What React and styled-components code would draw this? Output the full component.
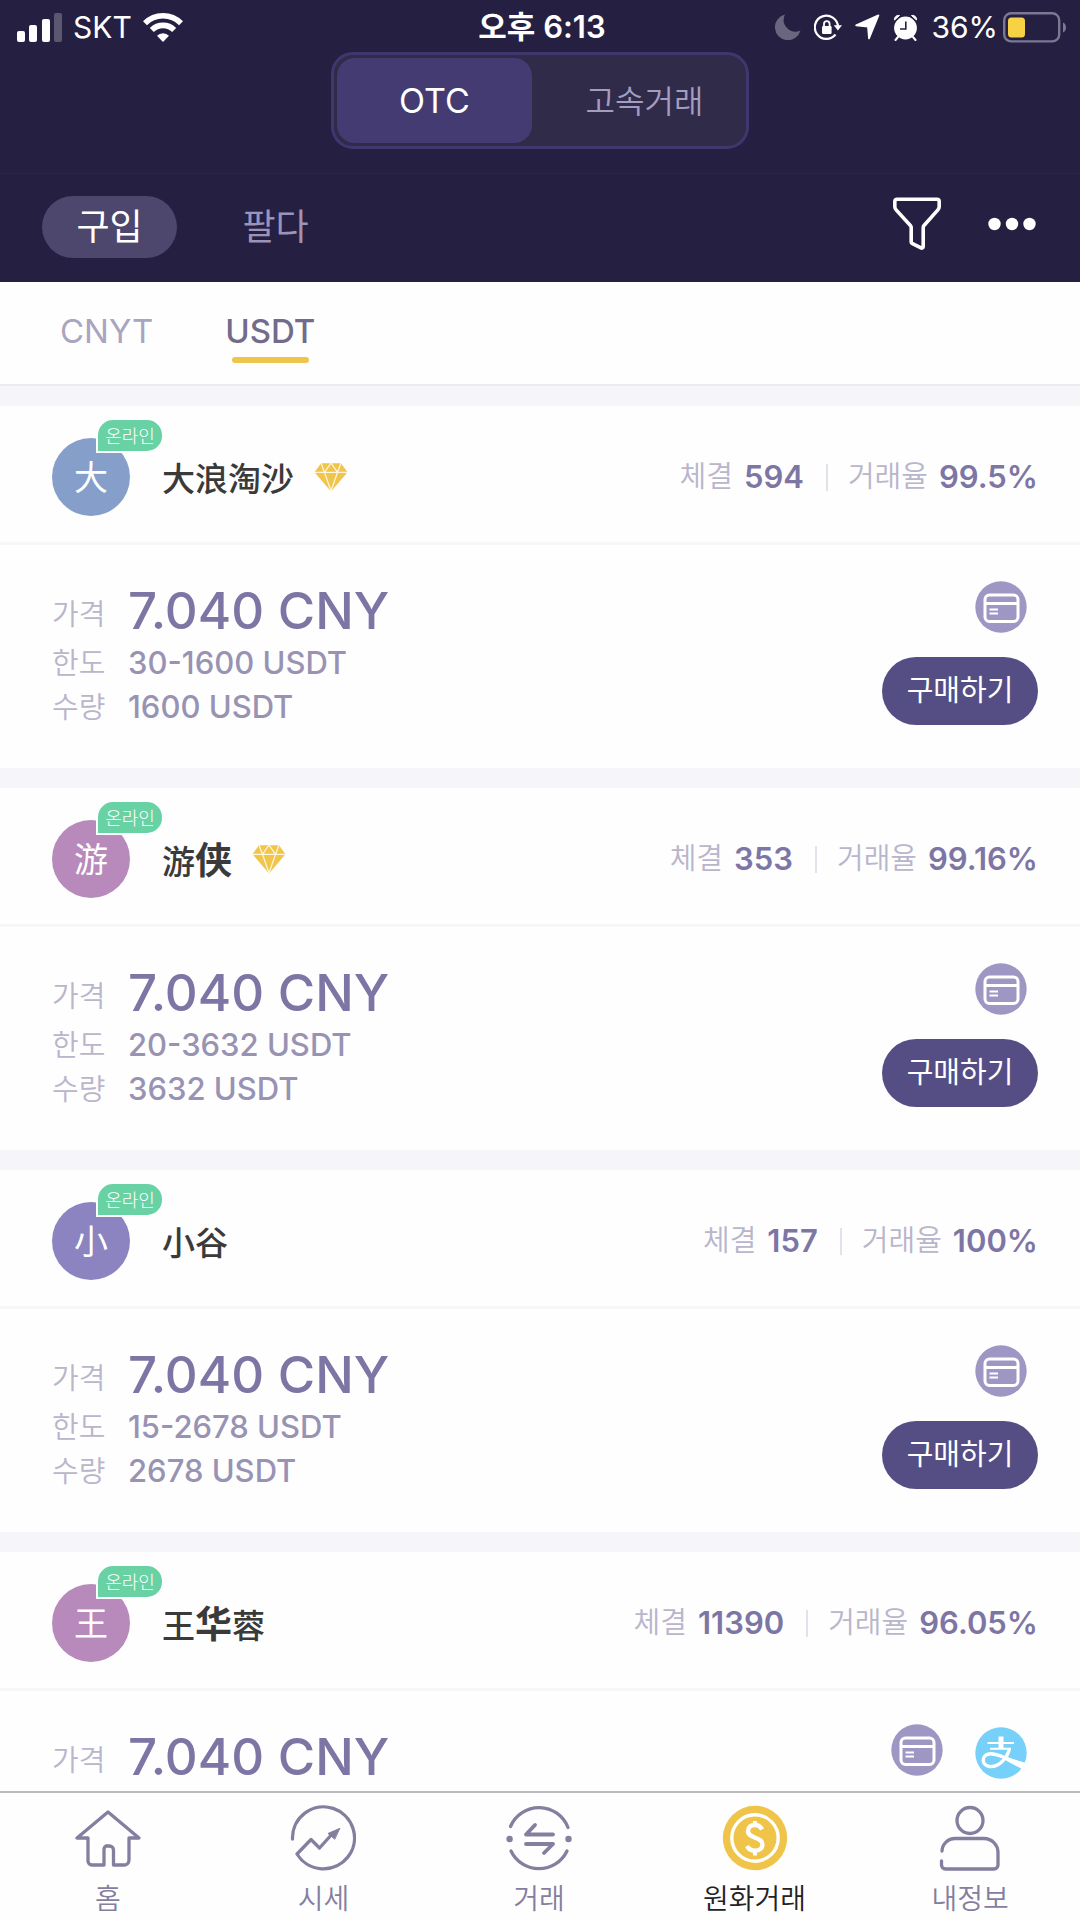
import styled, { createGlobalStyle } from "styled-components";

const GlobalStyle = createGlobalStyle`
  * {
    box-sizing: border-box;
  }
  body {
    margin: 0;
    background: #fefefe;
    font-family: Inter, "Noto Sans CJK KR", sans-serif;
    color: #3a3a3a;
  }
  button {
    font-family: inherit;
    border: 0;
    padding: 0;
    background: none;
    cursor: pointer;
  }
  svg {
    display: block;
    flex: none;
  }
`;

const offers = [
  {
    name: [{ text: "大浪淘沙" }],
    initial: "大",
    color: "#869fca",
    vip: true,
    deals: "594",
    rate: "99.5%",
    limit: "30-1600 USDT",
    amount: "1600 USDT",
    methods: ["card"],
  },
  {
    name: [{ text: "游" }, { text: "侠", heavy: true }],
    initial: "游",
    color: "#b889bb",
    vip: true,
    deals: "353",
    rate: "99.16%",
    limit: "20-3632 USDT",
    amount: "3632 USDT",
    methods: ["card"],
  },
  {
    name: [{ text: "小谷" }],
    initial: "小",
    color: "#8b84c1",
    deals: "157",
    rate: "100%",
    limit: "15-2678 USDT",
    amount: "2678 USDT",
    methods: ["card"],
  },
  {
    name: [{ text: "王" }, { text: "华", heavy: true }, { text: "蓉" }],
    initial: "王",
    color: "#b889bb",
    deals: "11390",
    rate: "96.05%",
    methods: ["card", "alipay"],
  },
];

const Screen = styled.div`
  display: flex;
  flex-direction: column;
  height: 100vh;
  overflow: hidden;
`;

const Header = styled.header`
  flex: none;
  background: #251f42;
  color: #fff;
`;

/* ---------- status bar ---------- */

const StatusBar = styled.div`
  display: grid;
  grid-template-columns: 1fr auto 1fr;
  align-items: center;
  height: 52px;
  padding: 2px 13px 0 17px;
  font-size: 30px;
  line-height: 36px;
`;

const StatusGroup = styled.div`
  display: flex;
  align-items: center;
  justify-content: ${({ $end }) => ($end ? "flex-end" : "flex-start")};
  gap: ${({ $end }) => ($end ? "13px" : "11px")};
`;

const Clock = styled.time`
  font-size: 31px;
  font-weight: 600;
`;

const Battery = styled.span`
  display: flex;
  align-items: center;
  gap: 5px;
`;

/* ---------- header controls ---------- */

const ModeRow = styled.div`
  display: flex;
  justify-content: center;
  padding-bottom: 24px;
  border-bottom: 1px solid #2b2547;
`;

const ModeSwitch = styled.div`
  display: flex;
  width: 418px;
  height: 97px;
  padding: 3px;
  border: 3px solid #40376e;
  border-radius: 22px;
  background: #302b49;
`;

const ModeButton = styled.button`
  flex: ${({ $active }) => ($active ? "0 0 195px" : 1)};
  padding: ${({ $active }) => ($active ? 0 : "0 0 4px 14px")};
  border-radius: 18px;
  background: ${({ $active }) => ($active ? "#453b73" : "transparent")};
  color: ${({ $active }) => ($active ? "#fff" : "#a59dc0")};
  font-size: ${({ $active }) => ($active ? "34px" : "32px")};
  font-weight: ${({ $active }) => ($active ? 400 : 350)};
`;

const SideRow = styled.div`
  display: flex;
  align-items: center;
  height: 108px;
  padding: 0 44px 2px 42px;
`;

const SideButton = styled.button`
  width: 135px;
  height: 62px;
  margin-right: 31px;
  border-radius: 31px;
  background: ${({ $active }) => ($active ? "#4d466d" : "transparent")};
  color: ${({ $active }) => ($active ? "#fff" : "#9c94b8")};
  font-size: 36px;
  line-height: 62px;
`;

const Actions = styled.div`
  display: flex;
  align-items: center;
  gap: 47px;
  margin-left: auto;
  padding-bottom: 6px;
`;

/* ---------- coin tabs ---------- */

const CoinTabs = styled.nav`
  display: flex;
  flex: none;
  gap: 72px;
  height: 104px;
  padding: 28px 60px 0;
  border-bottom: 2px solid #ececef;
  background: #fefefe;
`;

const CoinTab = styled.button`
  display: flex;
  flex-direction: column;
  align-items: center;
  color: ${({ $active }) => ($active ? "#726b8c" : "#a9a4c0")};
  font-size: 33px;
  font-weight: ${({ $active }) => ($active ? 500 : 400)};
  line-height: 42px;

  &::after {
    content: "";
    width: 77px;
    height: 6px;
    margin-top: 5px;
    border-radius: 3px;
    background: ${({ $active }) => ($active ? "#efc64d" : "transparent")};
  }
`;

/* ---------- offers ---------- */

const OfferList = styled.main`
  display: flex;
  flex: 1;
  flex-direction: column;
  gap: 20px;
  min-height: 0;
  padding-top: 20px;
  overflow: hidden;
  background: #f6f6fa;
`;

const Card = styled.article`
  flex: none;
  background: #fefefe;
`;

const CardHead = styled.div`
  display: flex;
  align-items: center;
  height: 139px;
  padding: 6px 42px 0 52px;
  border-bottom: 3px solid #f7f7fa;
`;

const Avatar = styled.div`
  position: relative;
  width: 78px;
  height: 78px;
  border-radius: 50%;
  background: ${({ $color }) => $color};
  color: #fff;
  font-family: "Noto Sans CJK SC", sans-serif;
  font-size: 34px;
  line-height: 76px;
  text-align: center;
`;

const Online = styled.span`
  position: absolute;
  top: -20px;
  left: 44px;
  width: 68px;
  height: 35px;
  border: 2px solid #fefefe;
  border-radius: 17px 17px 17px 0;
  background: #68d2a5;
  font-family: "Noto Sans CJK KR", sans-serif;
  font-size: 18px;
  font-weight: 300;
  line-height: 30px;
  text-align: center;
  white-space: nowrap;
`;

const Name = styled.h2`
  margin: 0 20px 0 32px;
  font-family: "Noto Sans CJK SC", sans-serif;
  font-size: 33px;
  font-weight: 500;
  line-height: 44px;
`;

const Heavy = styled.span`
  font-size: 37px;
  font-weight: 700;
`;

const Stats = styled.div`
  display: flex;
  align-items: center;
  margin-left: auto;
`;

const Stat = styled.span`
  display: flex;
  align-items: center;
  gap: 11px;
  line-height: 36px;

  & + & {
    margin-left: 22px;
    padding-left: 22px;
    background: linear-gradient(#e3e2ea, #e3e2ea) left center / 2px 27px no-repeat;
  }
`;

const Label = styled.span`
  color: #b9b5cb;
  font-size: 29px;
  font-weight: 350;
`;

const StatValue = styled.span`
  color: #7d76a5;
  font-size: 31px;
  font-weight: 600;
`;

const CardBody = styled.div`
  display: flex;
  justify-content: space-between;
  height: 223px;
  padding: 36px 42px 0 52px;
`;

const Terms = styled.dl`
  display: grid;
  grid-template-columns: 76px auto;
  grid-template-rows: 60px 44px 44px;
  align-items: baseline;
  align-content: start;
  margin: 0;
`;

const Term = styled.dt`
  align-self: ${({ $price }) => ($price ? "end" : "baseline")};
  padding-bottom: ${({ $price }) => ($price ? "4px" : 0)};
  color: #b9b5cb;
  font-size: 29px;
  font-weight: 350;
  line-height: 44px;
`;

const Detail = styled.dd`
  margin: 0;
  color: ${({ $price }) => ($price ? "#7d76a5" : "#9893b3")};
  font-size: ${({ $price }) => ($price ? "51px" : "31px")};
  font-weight: 500;
  line-height: ${({ $price }) => ($price ? "60px" : "44px")};
`;

const Side = styled.div`
  display: flex;
  flex-direction: column;
  align-items: flex-end;
  gap: 24px;
`;

const Methods = styled.div`
  display: flex;
  align-items: flex-end;
  gap: 32px;
  height: 52px;
  padding-right: 11px;

  & > :not(:last-child) {
    margin-bottom: 3px;
  }
`;

const BuyButton = styled.button`
  width: 156px;
  height: 68px;
  border-radius: 34px;
  background: #554e85;
  color: #fff;
  font-size: 29px;
  line-height: 66px;
`;

/* ---------- bottom navigation ---------- */

const BottomNav = styled.nav`
  display: grid;
  flex: none;
  grid-template-columns: repeat(5, 1fr);
  height: 129px;
  padding-right: 2px;
  border-top: 2px solid #b9b9be;
  background: #fefefe;
`;

const NavItem = styled.a`
  display: flex;
  flex-direction: column;
  align-items: center;
  gap: 10px;
  padding-top: 12px;
  color: ${({ $active }) => ($active ? "#222" : "#847e9f")};
  font-size: 28px;
  font-weight: 350;
  line-height: 36px;
  text-decoration: none;
`;

/* ---------- icons ---------- */

function SignalIcon() {
  return (
    <svg width="45" height="30" viewBox="0 0 45 30" fill="#fff" aria-hidden="true">
      <rect x="0" y="19" width="8" height="11" rx="2" />
      <rect x="12" y="13" width="8" height="17" rx="2" />
      <rect x="25" y="7" width="8" height="23" rx="2" />
      <rect x="37" y="1" width="8" height="29" rx="2" opacity="0.25" />
    </svg>
  );
}

function WifiIcon() {
  return (
    <svg width="40" height="30" viewBox="0 0 40 30" aria-hidden="true">
      <g fill="none" stroke="#fff" strokeWidth="5.6">
        <path d="M2 11.2a25.5 25.5 0 0 1 36 0" />
        <path d="M8.8 18a15.8 15.8 0 0 1 22.4 0" />
      </g>
      <path d="M20 30l-6-6.2a8.4 8.4 0 0 1 12 0z" fill="#fff" />
    </svg>
  );
}

function MoonIcon() {
  return (
    <svg width="26" height="26" viewBox="0 0 26 26" aria-hidden="true">
      <path d="M10 0.5A13 13 0 1 0 25.5 16.5 11.8 11.8 0 0 1 10 0.5z" fill="#6b6680" />
    </svg>
  );
}

function LockIcon() {
  return (
    <svg width="28" height="27" viewBox="0 0 28 27" fill="none" aria-hidden="true">
      <path d="M24 12.5A11.6 11.6 0 1 0 21.5 20.5" stroke="#fff" strokeWidth="2.2" />
      <path d="M19.8 11.2h8.2l-4.1 5.4z" fill="#fff" />
      <rect x="8" y="12" width="9.6" height="8" rx="1.2" fill="#fff" />
      <path d="M10 12.5V10a2.8 2.8 0 0 1 5.6 0v2.5" stroke="#fff" strokeWidth="1.8" />
    </svg>
  );
}

function LocationIcon() {
  return (
    <svg width="25" height="26" viewBox="0 0 25 26" aria-hidden="true">
      <path
        d="M23.4 1.4L14 24.4 13 12.6 1.2 11.4z"
        fill="#fff"
        stroke="#fff"
        strokeWidth="1.8"
        strokeLinejoin="round"
      />
    </svg>
  );
}

function AlarmIcon() {
  return (
    <svg width="25" height="27" viewBox="0 0 25 27" aria-hidden="true">
      <circle cx="12.5" cy="14" r="11.4" fill="#fff" />
      <path d="M1.5 6A4 4 0 0 1 6.500 1.500zM23.5 6A4 4 0 0 0 18.500 1.500z" fill="#fff" stroke="#fff" />
      <path d="M5 23l-2.500 3M20 23l2.500 3" stroke="#fff" strokeWidth="2" strokeLinecap="round" />
      <path d="M12.8 7.500v7.500H7" fill="none" stroke="#251f42" strokeWidth="1.6" />
    </svg>
  );
}

function BatteryIcon() {
  return (
    <svg width="64" height="31" viewBox="0 0 64 31" aria-hidden="true">
      <rect x="1.2" y="1.2" width="55" height="28.2" rx="7" fill="none" stroke="#7c7891" strokeWidth="2.4" />
      <rect x="5" y="5.5" width="17" height="20" rx="3.5" fill="#f7d344" />
      <path d="M60 10.5c4 1.5 4 8.500 0 10z" fill="#7c7891" />
    </svg>
  );
}

function FilterIcon() {
  return (
    <svg width="48" height="54" viewBox="0 0 48 54" fill="none" aria-hidden="true">
      <path
        d="M4 2.2h40a2.2 2.2 0 0 1 2.2 2.2v5.2a5 5 0 0 1-1.3 3.3L31 28.5a3 3 0 0 0-.8 2V49.5a1.5 1.5 0 0 1-2.2 1.4l-9-4.6a1.5 1.5 0 0 1-.8-1.3V30.5a3 3 0 0 0-.8-2L3.1 12.9a5 5 0 0 1-1.3-3.3V4.4A2.2 2.2 0 0 1 4 2.2z"
        stroke="#fff"
        strokeWidth="3.6"
        strokeLinejoin="round"
      />
    </svg>
  );
}

function MoreIcon() {
  return (
    <svg width="48" height="14" viewBox="0 0 48 14" fill="#fff" aria-hidden="true">
      <circle cx="6.5" cy="7" r="6.2" />
      <circle cx="24" cy="7" r="6.2" />
      <circle cx="41.5" cy="7" r="6.2" />
    </svg>
  );
}

function DiamondIcon() {
  return (
    <svg width="34" height="30" viewBox="0 0 34 30" role="img" aria-label="VIP">
      <path d="M7 1.2h20l6.5 9L17 29.5 0.5 10.2z" fill="#efc54c" />
      <path
        d="M0 10.4h34M7 1l3.500 9.400L17 1l6.500 9.400L27 1M10.500 10.400L17 29l6.500-18.600"
        fill="none"
        stroke="#fff6dc"
        strokeWidth="1.3"
      />
    </svg>
  );
}

function CardIcon() {
  return (
    <svg width="52" height="52" viewBox="0 0 52 52" fill="none" role="img" aria-label="은행 카드">
      <circle cx="26" cy="26" r="25.7" fill="#9e97c4" />
      <rect x="10" y="14" width="33" height="26.5" rx="4.5" stroke="#fff" strokeWidth="3" />
      <path d="M10 22.5h33" stroke="#fff" strokeWidth="3" />
      <path d="M14.5 28.5h8.5M14.5 32.5h8.5" stroke="#fff" strokeWidth="1.8" />
    </svg>
  );
}

function AlipayIcon() {
  return (
    <svg width="52" height="52" viewBox="0 0 52 52" fill="none" role="img" aria-label="알리페이">
      <circle cx="26" cy="26" r="25.7" fill="#76d0f9" />
      <path d="M26 9.5v12" stroke="#fff" strokeWidth="5" />
      <path d="M12.5 16h26.5M15 21.8h21" stroke="#fff" strokeWidth="2" />
      <path
        d="M34.5 21.5C32 32 23.5 40.5 14.5 39.5 6.5 38.5 6 28.5 14 27c8-1.5 20 6 33 11"
        stroke="#fff"
        strokeWidth="3.4"
      />
      <path d="M33 30.5l18.500 5.500-3.700 6.500-16.800-9z" fill="#fff" />
    </svg>
  );
}

const methodIcons = { card: CardIcon, alipay: AlipayIcon };

function LineIcon({ children }) {
  return (
    <svg
      width="66"
      height="66"
      viewBox="0 0 66 66"
      fill="none"
      stroke="#847e9f"
      strokeWidth="3.3"
      strokeLinecap="round"
      strokeLinejoin="round"
      aria-hidden="true"
    >
      {children}
    </svg>
  );
}

function HomeIcon() {
  return (
    <LineIcon>
      <path d="M33 7L2 33h11v23a4 4 0 0 0 4 4h12V45a4 4 0 0 1 2-4h3.500a4 4 0 0 1 4 4v15H49a5 5 0 0 0 5-5V33h10z" />
    </LineIcon>
  );
}

function MarketIcon() {
  return (
    <LineIcon>
      <path d="M2.500 34A31 31 0 1 1 7 49L21 34.500l8.500 8.500L43 28" />
      <path d="M49.500 23.500l-11.500 5 6.500 5.500z" fill="#847e9f" strokeWidth="1" />
    </LineIcon>
  );
}

function TradeIcon() {
  return (
    <LineIcon>
      <path d="M4.500 21.500A31 31 0 0 1 62 22.500M5 46A31 31 0 0 0 61 46" />
      <path d="M47 29.500H20l9-9.500M20 39h27l-9 9" strokeWidth="3.8" />
      <g fill="#847e9f" stroke="none">
        <circle cx="3.6" cy="34" r="3.2" />
        <circle cx="62.500" cy="34" r="3.2" />
      </g>
    </LineIcon>
  );
}

function CoinIcon() {
  return (
    <svg width="66" height="66" viewBox="0 0 66 66" fill="none" stroke="#fff" aria-hidden="true">
      <circle cx="33" cy="33" r="32.2" fill="#efc449" stroke="none" />
      <circle cx="33" cy="33" r="23.2" strokeWidth="3.4" />
      <path
        d="M40 24.5c-1.500-3-4-4.500-7-4.500-4 0-7 2.200-7 6 0 8 14.500 5.500 14.500 13.500 0 4-3.500 6.200-7.500 6.200s-6.500-1.700-8-4.700"
        strokeWidth="4.4"
      />
      <path d="M33 16v5M33 45v5.500" strokeWidth="4" />
    </svg>
  );
}

function ProfileIcon() {
  return (
    <LineIcon>
      <circle cx="33" cy="15.5" r="13" />
      <path d="M5 46a13 13 0 0 1 13-12.500h29a14 14 0 0 1 14 14V60a4 4 0 0 1-4 4H8.500a4 4 0 0 1-4-4v-4" />
    </LineIcon>
  );
}

const navItems = [
  { label: "홈", Icon: HomeIcon },
  { label: "시세", Icon: MarketIcon },
  { label: "거래", Icon: TradeIcon },
  { label: "원화거래", Icon: CoinIcon, active: true },
  { label: "내정보", Icon: ProfileIcon },
];

function OfferCard({ offer }) {
  return (
    <Card>
      <CardHead>
        <Avatar $color={offer.color}>
          {offer.initial}
          <Online>온라인</Online>
        </Avatar>
        <Name>
          {offer.name.map(({ text, heavy }) => (heavy ? <Heavy key={text}>{text}</Heavy> : text))}
        </Name>
        {offer.vip && <DiamondIcon />}
        <Stats>
          <Stat>
            <Label>체결</Label>
            <StatValue>{offer.deals}</StatValue>
          </Stat>
          <Stat>
            <Label>거래율</Label>
            <StatValue>{offer.rate}</StatValue>
          </Stat>
        </Stats>
      </CardHead>
      <CardBody>
        <Terms>
          <Term $price>가격</Term>
          <Detail $price>7.040 CNY</Detail>
          {offer.limit && (
            <>
              <Term>한도</Term>
              <Detail>{offer.limit}</Detail>
            </>
          )}
          {offer.amount && (
            <>
              <Term>수량</Term>
              <Detail>{offer.amount}</Detail>
            </>
          )}
        </Terms>
        <Side>
          <Methods>
            {offer.methods.map((method) => {
              const Icon = methodIcons[method];
              return <Icon key={method} />;
            })}
          </Methods>
          {offer.amount && <BuyButton type="button">구매하기</BuyButton>}
        </Side>
      </CardBody>
    </Card>
  );
}

export default function App() {
  return (
    <>
      <GlobalStyle />
      <Screen>
        <Header>
          <StatusBar>
            <StatusGroup>
              <SignalIcon />
              SKT
              <WifiIcon />
            </StatusGroup>
            <Clock>오후 6:13</Clock>
            <StatusGroup $end>
              <MoonIcon />
              <LockIcon />
              <LocationIcon />
              <AlarmIcon />
              <Battery>
                36%
                <BatteryIcon />
              </Battery>
            </StatusGroup>
          </StatusBar>
          <ModeRow>
            <ModeSwitch>
              <ModeButton type="button" $active>OTC</ModeButton>
              <ModeButton type="button">고속거래</ModeButton>
            </ModeSwitch>
          </ModeRow>
          <SideRow>
            <SideButton type="button" $active>구입</SideButton>
            <SideButton type="button">팔다</SideButton>
            <Actions>
              <button type="button" aria-label="필터"><FilterIcon /></button>
              <button type="button" aria-label="더보기"><MoreIcon /></button>
            </Actions>
          </SideRow>
        </Header>
        <CoinTabs>
          <CoinTab type="button">CNYT</CoinTab>
          <CoinTab type="button" $active>USDT</CoinTab>
        </CoinTabs>
        <OfferList>
          {offers.map((offer) => (
            <OfferCard key={offer.initial} offer={offer} />
          ))}
        </OfferList>
        <BottomNav>
          {navItems.map(({ label, Icon, active }) => (
            <NavItem key={label} href="#" $active={active}>
              <Icon />
              {label}
            </NavItem>
          ))}
        </BottomNav>
      </Screen>
    </>
  );
}
